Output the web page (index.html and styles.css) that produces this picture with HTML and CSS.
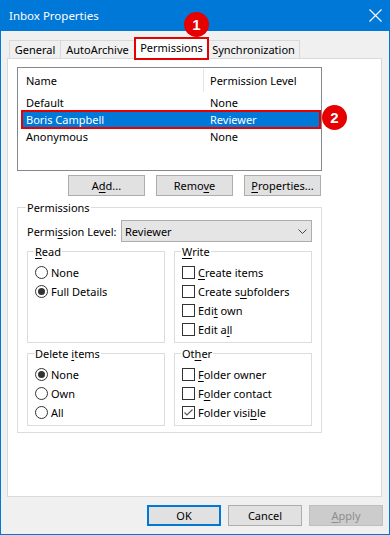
FILE: index.html
```html
<!DOCTYPE html>
<html lang="en">
<head>
    <meta charset="UTF-8">
    <title>Inbox Properties</title>
    <link rel="stylesheet" href="styles.css">
</head>
<body>
    <div class="window">
        <div class="titlebar">
            <span class="title">Inbox Properties</span>
            <svg class="close" width="13" height="13" viewBox="0 0 13 13">
                <path d="M0.5 0.5 L12.5 12.5 M12.5 0.5 L0.5 12.5" stroke="#fff" stroke-width="1.1" fill="none"/>
            </svg>
        </div>

        <div class="tabs">
            <div class="tab tab-general">General</div>
            <div class="tab tab-archive">AutoArchive</div>
            <div class="tab tab-perm active">Permissions<span class="badge badge-1">1</span></div>
            <div class="tab tab-sync">Synchronization</div>
        </div>

        <div class="page">
            <div class="content">
                <div class="listbox">
                    <div class="list-head">
                        <div class="head-name">Name</div>
                        <div class="head-level">Permission Level</div>
                    </div>
                    <div class="row"><span>Default</span><span>None</span></div>
                    <div class="row selected"><span>Boris Campbell</span><span>Reviewer</span><span class="badge badge-2">2</span></div>
                    <div class="row"><span>Anonymous</span><span>None</span></div>
                </div>

                <div class="list-buttons">
                    <button class="btn btn-wide">A<u>d</u>d...</button>
                    <button class="btn btn-wide">Remo<u>v</u>e</button>
                    <button class="btn btn-wide"><u>P</u>roperties...</button>
                </div>

                <fieldset class="group outer">
                    <legend>Permissions</legend>
                    <div class="level-row">
                        <span class="level-label">Permi<u>s</u>sion Level:</span>
                        <div class="combo">
                            <span>Reviewer</span>
                            <svg width="9" height="5" viewBox="0 0 9 5">
                                <path d="M0.5 0.5 L4.5 4.5 L8.5 0.5" stroke="#444" stroke-width="1" fill="none"/>
                            </svg>
                        </div>
                    </div>

                    <div class="subgroups">
                        <fieldset class="group">
                            <legend><u>R</u>ead</legend>
                            <div class="opts">
                                <div class="opt"><span class="radio"></span><span>None</span></div>
                                <div class="opt"><span class="radio on"></span><span>Full Details</span></div>
                            </div>
                        </fieldset>
                        <fieldset class="group">
                            <legend><u>W</u>rite</legend>
                            <div class="opts">
                                <div class="opt"><span class="check"></span><span><u>C</u>reate items</span></div>
                                <div class="opt"><span class="check"></span><span>Create s<u>u</u>bfolders</span></div>
                                <div class="opt"><span class="check"></span><span>Edi<u>t</u> own</span></div>
                                <div class="opt"><span class="check"></span><span>Edit a<u>l</u>l</span></div>
                            </div>
                        </fieldset>
                        <fieldset class="group">
                            <legend>Delete <u>i</u>tems</legend>
                            <div class="opts">
                                <div class="opt"><span class="radio on"></span><span>None</span></div>
                                <div class="opt"><span class="radio"></span><span>Own</span></div>
                                <div class="opt"><span class="radio"></span><span>All</span></div>
                            </div>
                        </fieldset>
                        <fieldset class="group">
                            <legend>Ot<u>h</u>er</legend>
                            <div class="opts">
                                <div class="opt"><span class="check"></span><span><u>F</u>older owner</span></div>
                                <div class="opt"><span class="check"></span><span>F<u>o</u>lder contact</span></div>
                                <div class="opt">
                                    <span class="check">
                                        <svg width="11" height="11" viewBox="0 0 11 11">
                                            <path d="M1.5 5.5 L4 8 L9.5 2.5" stroke="#555" stroke-width="1.1" fill="none"/>
                                        </svg>
                                    </span>
                                    <span>Folder visi<u>b</u>le</span>
                                </div>
                            </div>
                        </fieldset>
                    </div>
                </fieldset>
            </div>
        </div>

        <div class="footer">
            <button class="btn default">OK</button>
            <button class="btn">Cancel</button>
            <button class="btn disabled"><u>A</u>pply</button>
        </div>
    </div>
</body>
</html>
```

FILE: styles.css
```css
body {
    margin: 0;
    font-family: 'Noto Sans', sans-serif;
    font-size: 11px;
    line-height: 15px;
    color: #000;
    background: #f0f0f0;
}

u {
    text-decoration-thickness: 1px;
    text-underline-offset: 2px;
}

.window {
    width: 390px;
    height: 535px;
    box-sizing: border-box;
    border: 1px solid #0078d7;
    border-top: none;
    background: #f0f0f0;
    display: flex;
    flex-direction: column;
}

.titlebar {
    height: 31px;
    margin: 0 -1px;
    padding: 0 8px 0 9px;
    background: #0078d7;
    color: #fff;
    font-size: 11.5px;
    display: flex;
    align-items: center;
    justify-content: space-between;
    flex-shrink: 0;
}

/* tabs */
.tabs {
    height: 27px;
    padding-left: 8px;
    display: flex;
    align-items: flex-end;
    flex-shrink: 0;
}

.tab {
    height: 18px;
    box-sizing: border-box;
    border: 1px solid #d9d9d9;
    border-bottom: none;
    background: #f0f0f0;
    display: flex;
    align-items: center;
    justify-content: center;
}

.tab-general { width: 52px; }
.tab-archive { width: 75px; margin-left: -1px; }
.tab-sync { width: 93px; margin-left: -2px; }

.tab.active {
    position: relative;
    z-index: 2;
    width: 75px;
    height: 23px;
    margin-left: -1px;
    margin-bottom: -2px;
    border: 2px solid #e60000;
    background: #fff;
    padding-bottom: 2px;
}

.badge {
    position: absolute;
    width: 25px;
    height: 25px;
    border-radius: 50%;
    background: #e60000;
    color: #fff;
    font-family: 'Liberation Sans', Arial, sans-serif;
    font-weight: bold;
    font-size: 15px;
    display: flex;
    align-items: center;
    justify-content: center;
}

.badge-1 { left: 48px; top: -27px; }
.badge-2 { left: 300px; top: -6px; }

/* page */
.page {
    margin-left: 6px;
    width: 375px;
    height: 439px;
    box-sizing: border-box;
    border: 1px solid #d9d9d9;
    background: #fff;
    padding: 8px 0 0 9px;
    flex-shrink: 0;
}

.content {
    width: 305px;
}

.listbox {
    height: 104px;
    box-sizing: border-box;
    border: 1px solid #828790;
}

.list-head {
    height: 26px;
    display: flex;
    align-items: flex-start;
    padding-top: 1px;
    box-sizing: border-box;
}

.head-name {
    width: 186px;
    height: 23px;
    box-sizing: border-box;
    padding-left: 8px;
    border-right: 1px solid #e5e5e5;
    display: flex;
    align-items: center;
}

.head-level {
    height: 23px;
    padding-left: 6px;
    display: flex;
    align-items: center;
}

.row {
    position: relative;
    width: 298px;
    height: 17px;
    margin-left: 4px;
    padding-left: 4px;
    box-sizing: border-box;
    display: grid;
    grid-template-columns: 184px 1fr;
    align-items: center;
}

.row.selected {
    background: #0078d7;
    color: #fff;
    outline: 2px solid #e60000;
    outline-offset: -1px;
}

.list-buttons {
    margin-top: 4px;
    padding-right: 1px;
    display: flex;
    justify-content: flex-end;
    gap: 11px;
}

.btn {
    height: 21px;
    width: 74px;
    box-sizing: border-box;
    border: 1px solid #adadad;
    background: #e1e1e1;
    font: inherit;
    color: #000;
    padding: 0;
}

.btn-wide { width: 77px; }

.btn.default { border: 2px solid #0078d7; }

.btn.disabled {
    background: #cccccc;
    border-color: #bfbfbf;
    color: #8d8d8d;
}

/* group boxes */
.group {
    margin: 0;
    padding: 0 7px 3px;
    border: 1px solid #dcdcdc;
    min-width: 0;
}

.group legend {
    padding: 0 1px;
    margin-left: -1px;
}

.group.outer {
    margin-top: 4px;
    padding: 0 9px 6px;
}

.level-row {
    margin-top: 5px;
    height: 22px;
    display: flex;
    align-items: center;
}

.level-label {
    width: 94px;
}

.combo {
    width: 191px;
    height: 22px;
    box-sizing: border-box;
    border: 1px solid #adadad;
    background: #e5e5e5;
    padding: 0 4px 0 3px;
    display: flex;
    align-items: center;
    justify-content: space-between;
}

.subgroups {
    margin-top: 2px;
    display: grid;
    grid-template-columns: 138px 138px;
    column-gap: 9px;
    row-gap: 3px;
}

.opts {
    margin-top: 4px;
}

.opt {
    height: 19px;
    display: flex;
    align-items: center;
}

.radio {
    width: 13px;
    height: 13px;
    box-sizing: border-box;
    border: 1px solid #333;
    border-radius: 50%;
    margin-right: 3px;
    display: flex;
    align-items: center;
    justify-content: center;
}

.radio.on::after {
    content: "";
    width: 7px;
    height: 7px;
    border-radius: 50%;
    background: #333;
}

.check {
    width: 13px;
    height: 13px;
    box-sizing: border-box;
    border: 1px solid #333;
    background: #fff;
    margin-right: 3px;
    display: flex;
    align-items: center;
    justify-content: center;
}

/* bottom buttons */
.footer {
    margin-top: 8px;
    padding-right: 6px;
    display: flex;
    justify-content: flex-end;
    gap: 7px;
}
```
